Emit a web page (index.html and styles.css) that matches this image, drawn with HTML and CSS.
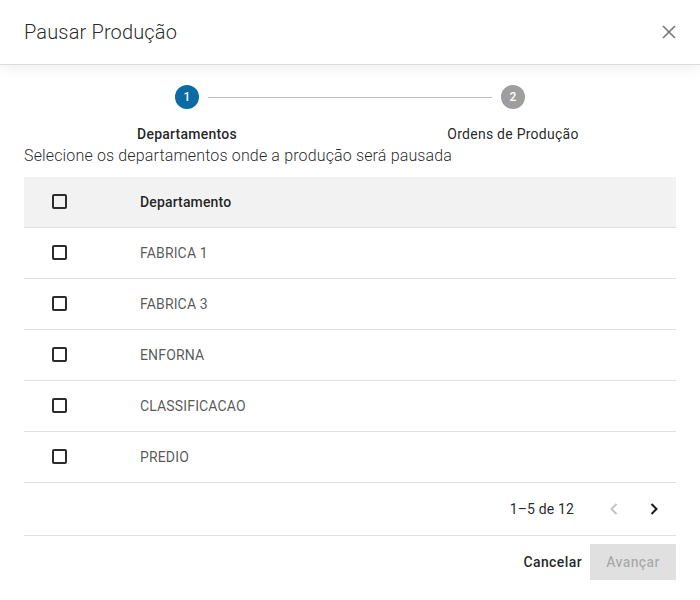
FILE: index.html
```html
<!DOCTYPE html>
<html lang="pt">
<head>
<meta charset="utf-8">
<title>Pausar Produção</title>
<link rel="stylesheet" href="styles.css">
</head>
<body>
<div class="dialog">
  <header class="dialog-header">
    <h1 class="dialog-title">Pausar Produção</h1>
    <button class="close-btn" aria-label="Fechar">
      <svg width="14" height="14" viewBox="0 0 14 14"><path d="M1 1L13 13M13 1L1 13" stroke="#757575" stroke-width="1.6" fill="none"/></svg>
    </button>
  </header>
  <main class="dialog-content">
    <div class="stepper">
      <div class="stepper-track">
        <span class="step-circle active">1</span>
        <span class="step-line"></span>
        <span class="step-circle">2</span>
      </div>
      <div class="stepper-labels">
        <span class="step-label active">Departamentos</span>
        <span class="step-label">Ordens de Produção</span>
      </div>
    </div>
    <p class="subtitle">Selecione os departamentos onde a produção será pausada</p>
    <div class="table">
      <div class="row head">
        <div class="cell-check"><span class="checkbox"></span></div>
        <div class="cell-text">Departamento</div>
      </div>
      <div class="row"><div class="cell-check"><span class="checkbox"></span></div><div class="cell-text">FABRICA 1</div></div>
      <div class="row"><div class="cell-check"><span class="checkbox"></span></div><div class="cell-text">FABRICA 3</div></div>
      <div class="row"><div class="cell-check"><span class="checkbox"></span></div><div class="cell-text">ENFORNA</div></div>
      <div class="row"><div class="cell-check"><span class="checkbox"></span></div><div class="cell-text">CLASSIFICACAO</div></div>
      <div class="row"><div class="cell-check"><span class="checkbox"></span></div><div class="cell-text">PREDIO</div></div>
      <div class="pagination">
        <span class="range">1–5 de 12</span>
        <button class="page-btn disabled" aria-label="Anterior">
          <svg width="10" height="14" viewBox="0 0 10 14"><path d="M7.5 2L2.5 7L7.5 12" stroke="#c4c4c4" stroke-width="2" fill="none"/></svg>
        </button>
        <button class="page-btn" aria-label="Próximo">
          <svg width="10" height="14" viewBox="0 0 10 14"><path d="M2.5 2L7.5 7L2.5 12" stroke="#1a1a1a" stroke-width="2" fill="none"/></svg>
        </button>
      </div>
    </div>
    <div class="actions">
      <button class="btn-text">Cancelar</button>
      <button class="btn-disabled">Avançar</button>
    </div>
  </main>
</div>
</body>
</html>
```
FILE: styles.css
```css
* { box-sizing: border-box; }
body {
  margin: 0;
  background: #fff;
  font-family: Roboto, "Liberation Sans", Arial, sans-serif;
  color: rgba(0,0,0,0.87);
}
.dialog { width: 700px; }
.dialog-header {
  height: 65px;
  padding: 0 24px;
  display: flex;
  align-items: center;
  justify-content: space-between;
  border-bottom: 1px solid #dcdcdc;
  box-shadow: 0 2px 14px rgba(0,0,0,0.08);
  position: relative;
}
.dialog-title {
  margin: 0;
  font-size: 20px;
  font-weight: 300;
  letter-spacing: 0.15px;
  color: rgba(0,0,0,0.87);
  padding-bottom: 1px;
}
.close-btn {
  border: 0;
  background: none;
  padding: 0;
  width: 14px;
  height: 14px;
  display: flex;
  cursor: pointer;
}
.dialog-content { padding: 0 24px; }
.stepper { padding-top: 20px; }
.stepper-track {
  display: flex;
  align-items: center;
  padding: 0 151px;
}
.step-circle {
  width: 24px;
  height: 24px;
  border-radius: 50%;
  background: #9e9e9e;
  color: #fff;
  font-size: 12px;
  font-weight: 500;
  display: flex;
  align-items: center;
  justify-content: center;
  flex: none;
}
.step-circle.active { background: #0b6ba5; }
.step-line {
  flex: 1;
  height: 1px;
  background: #bdbdbd;
  margin: 0 9px;
}
.stepper-labels {
  display: grid;
  grid-template-columns: 1fr 1fr;
  margin-top: 15px;
}
.step-label {
  text-align: center;
  font-size: 14px;
  line-height: 20px;
  letter-spacing: 0.25px;
  color: rgba(0,0,0,0.87);
}
.step-label.active { font-weight: 500; }
.subtitle {
  margin: 2px 0 0;
  font-size: 16px;
  line-height: 20px;
  font-weight: 300;
  letter-spacing: 0.15px;
  color: rgba(0,0,0,0.87);
}
.table { margin-top: 11px; }
.row {
  display: flex;
  align-items: center;
  height: 51px;
  padding-bottom: 1px;
  border-bottom: 1px solid #e0e0e0;
}
.row.head { background: #f2f2f2; }
.cell-check {
  width: 116px;
  padding-left: 28px;
  display: flex;
  align-items: center;
}
.checkbox {
  width: 15px;
  height: 15px;
  border: 2px solid #2b2b2b;
  border-radius: 2px;
  display: block;
}
.cell-text {
  font-size: 14px;
  letter-spacing: 0.15px;
  color: rgba(0,0,0,0.68);
}
.head .cell-text { font-weight: 500; color: rgba(0,0,0,0.87); }
.pagination {
  height: 53px;
  display: flex;
  align-items: center;
  justify-content: flex-end;
  border-bottom: 1px solid #e0e0e0;
  padding-right: 2px;
  padding-bottom: 1px;
}
.range {
  font-size: 14px;
  letter-spacing: 0.15px;
  color: rgba(0,0,0,0.87);
  margin-right: 20px;
}
.page-btn {
  width: 40px;
  height: 40px;
  border: 0;
  background: none;
  display: flex;
  align-items: center;
  justify-content: center;
  padding: 0;
}
.actions {
  display: flex;
  justify-content: flex-end;
  padding-top: 8px;
}
.btn-text, .btn-disabled {
  font-family: inherit;
  font-size: 14px;
  font-weight: 500;
  letter-spacing: 0.4px;
  height: 36px;
  border: 0;
  border-radius: 0;
}
.btn-text {
  background: none;
  color: rgba(0,0,0,0.87);
  padding: 0 8px;
}
.btn-disabled {
  background: #e0e0e0;
  color: rgba(0,0,0,0.26);
  padding: 0;
  width: 86px;
}
```
